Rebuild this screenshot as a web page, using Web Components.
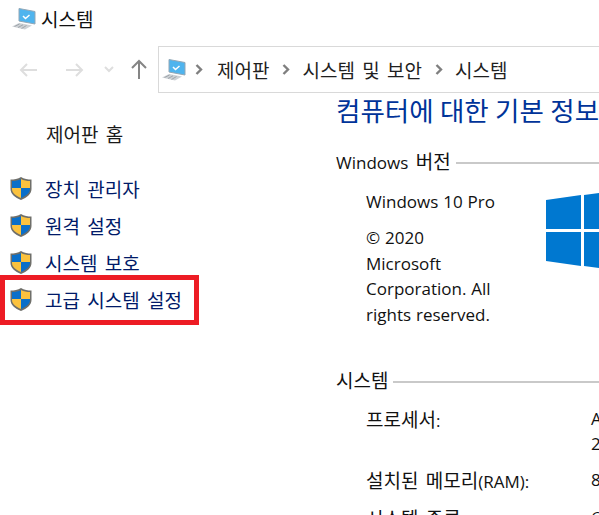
<!DOCTYPE html>
<html lang="ko">
<head>
<meta charset="utf-8">
<title>시스템</title>
<style>
  html, body { margin: 0; height: 100%; background: #fff; overflow: hidden; }
  body { font-family: "Noto Sans CJK KR", "Open Sans", sans-serif; }
</style>
</head>
<body>
<sys-window></sys-window>
<script>
const PC_ICON = `<svg width="24" height="22" viewBox="0 0 24 22">
  <path d="M7 .5 L23 3.500 V16 L7 13 Z" fill="#4fb4ee" stroke="#93a7b6" stroke-width="1"/>
  <path d="M11 8 l2.500 2.500 l4 -3.500" fill="none" stroke="#fff" stroke-width="1.500"/>
  <path d="M0 18.500 L7 15 L20 17.500 L13 21.500 Z" fill="#cdd1d5"/>
  <path d="M2.500 18.500 L7.500 16 M6 19.500 L11 16.800 M9.500 20.500 L14.500 17.500" stroke="#8d949a" stroke-width=".7"/>
</svg>`;
const SHIELD = `<svg width="24" height="25" viewBox="0 0 24 25">
  <path d="M12 1 C9 3 5 3.500 1.500 3.500 V13 C1.500 18 6 21.500 12 24 C18 21.500 22.500 18 22.500 13 V3.500 C19 3.500 15 3 12 1 Z" fill="#6f6f6a"/>
  <path d="M12 3 C9.500 4.500 6 5 3 5 V12 H12 Z" fill="#0a6fc9"/>
  <path d="M12 3 C14.500 4.500 18 5 21 5 V12 H12 Z" fill="#fbc23e"/>
  <path d="M3 12 H12 V22 C7 20 3 17 3 13 Z" fill="#fbc23e"/>
  <path d="M21 12 H12 V22 C17 20 21 17 21 13 Z" fill="#0a6fc9"/>
</svg>`;
const CHEVRON = `<svg width="8" height="11" viewBox="0 0 8 11"><path d="M1.500 1 L6 5.500 L1.500 10" fill="none" stroke="#7f7f7f" stroke-width="2.400"/></svg>`;

class NavToolbar extends HTMLElement {
  constructor() {
    super();
    this.attachShadow({ mode: 'open' });
    this.shadowRoot.innerHTML = `
      <style>
        :host { display: flex; height: 47px; margin-top: 9px; color: #1f1f1f; }
        .btns { width: 158px; display: flex; align-items: center; flex: none; }
        svg { display: block; flex: none; }
        .addr { flex: 1; border: 1px solid #d9d9d9; border-right: 0; display: flex; align-items: center; padding-left: 3px; font-size: 19px; word-spacing: 2px; white-space: nowrap; }
        .sep { display: block; margin: 0 12px 0 13px; flex: none; }
        .sep.first { margin: 0 14px 0 9px; }
      </style>
      <div class="btns">
        <svg style="margin-left:18px" width="20" height="16" viewBox="0 0 20 16"><path d="M19 8 H3 M9 2 L3 8 L9 14" fill="none" stroke="#dedede" stroke-width="2"/></svg>
        <svg style="margin-left:27px" width="20" height="16" viewBox="0 0 20 16"><path d="M1 8 H17 M11 2 L17 8 L11 14" fill="none" stroke="#dedede" stroke-width="2"/></svg>
        <svg style="margin-left:19px" width="10" height="7" viewBox="0 0 10 7"><path d="M1 1 L5 5 L9 1" fill="none" stroke="#dedede" stroke-width="2"/></svg>
        <svg style="margin-left:16px" width="18" height="21" viewBox="0 0 18 21"><path d="M9 20 V3 M2 9 L9 2 L16 9" fill="none" stroke="#858585" stroke-width="2"/></svg>
      </div>
      <div class="addr">
        ${PC_ICON}
        <span class="sep first">${CHEVRON}</span>
        <span>제어판</span>
        <span class="sep">${CHEVRON}</span>
        <span>시스템 및 보안</span>
        <span class="sep">${CHEVRON}</span>
        <span>시스템</span>
      </div>`;
  }
}
customElements.define('nav-toolbar', NavToolbar);

class TaskLink extends HTMLElement {
  constructor() {
    super();
    this.attachShadow({ mode: 'open' });
    this.shadowRoot.innerHTML = `
      <style>
        :host { display: flex; align-items: center; height: 37px; gap: 12px; padding-left: 9px; color: #001a68; font-size: 19px; word-spacing: 2px; white-space: nowrap; position: relative; }
        svg { flex: none; display: block; }
        :host([marked])::after { content: ""; position: absolute; left: 0; top: -6px; width: 199px; height: 50px; box-sizing: border-box; border: 5px solid #ed1c24; }
      </style>
      ${SHIELD}<span><slot></slot></span>`;
  }
}
customElements.define('task-link', TaskLink);

class SideNav extends HTMLElement {
  constructor() {
    super();
    this.attachShadow({ mode: 'open' });
    this.shadowRoot.innerHTML = `
      <style>
        :host { display: block; width: 336px; flex: none; padding-top: 26px; box-sizing: border-box; }
        .home { padding-left: 46px; height: 30px; line-height: 30px; color: #1a1a1a; font-size: 19px; word-spacing: 2px; margin-bottom: 21px; }
        .list { display: flex; flex-direction: column; }
      </style>
      <div class="home">제어판 홈</div>
      <div class="list"><slot></slot></div>`;
  }
}
customElements.define('side-nav', SideNav);

class InfoSection extends HTMLElement {
  constructor() {
    super();
    this.attachShadow({ mode: 'open' });
    this.shadowRoot.innerHTML = `
      <style>
        :host { display: block; }
        .head { display: flex; align-items: center; gap: 5px; height: 24px; color: #111; white-space: nowrap; }
        .rule { flex: 1; height: 2px; background: #c9c9c9; margin-top: 6px; }
        .body { padding-left: 30px; }
      </style>
      <div class="head"><slot name="title"></slot><div class="rule"></div></div>
      <div class="body"><slot></slot></div>`;
  }
}
customElements.define('info-section', InfoSection);

class WinLogo extends HTMLElement {
  constructor() {
    super();
    this.attachShadow({ mode: 'open' });
    this.shadowRoot.innerHTML = `
      <style>
        :host { display: block; position: absolute; left: 546px; top: 192px; }
        svg { display: block; }
      </style>
      <svg width="53" height="77" viewBox="0 0 53 77">
        <path d="M0 8 L35 3 V37 H0 Z M38 3 L53 1 V37 H38 Z M0 40 H35 V74 L0 69 Z M38 40 H53 V76 L38 74 Z" fill="#0078d0"/>
      </svg>`;
  }
}
customElements.define('win-logo', WinLogo);

class SysWindow extends HTMLElement {
  constructor() {
    super();
    this.attachShadow({ mode: 'open' });
    this.shadowRoot.innerHTML = `
      <style>
        :host { display: block; width: 599px; height: 515px; overflow: hidden; position: relative; font-family: "Noto Sans CJK KR", "Open Sans", sans-serif; font-size: 19px; word-spacing: 2px; }
        .en { font-family: "Open Sans", "Noto Sans CJK KR", sans-serif; font-size: 17px; word-spacing: .5px; }
        .title { display: flex; align-items: center; gap: 5px; height: 37px; padding-left: 12px; color: #111; }
        .title svg { display: block; }
        .main { display: flex; height: 422px; }
        .content { flex: 1; min-width: 0; color: #111; }
        h1 { font: inherit; font-size: 26.500px; letter-spacing: 0; word-spacing: -1px; color: #003399; margin: 4px 0 0; height: 25px; line-height: 25px; white-space: nowrap; }
        info-section.ver { margin-top: 26px; }
        info-section.sys { margin-top: 40px; }
        .name { margin-top: 17px; line-height: 25px; }
        .copy { margin-top: 11px; line-height: 25.500px; width: 130px; }
        .rows { margin-top: 15px; }
        .row { display: flex; line-height: 25px; margin-bottom: 11px; white-space: nowrap; }
        .row .k { width: 225px; flex: none; }
      </style>
      <div class="title">${PC_ICON}<span>시스템</span></div>
      <nav-toolbar></nav-toolbar>
      <div class="main">
        <side-nav>
          <task-link>장치 관리자</task-link>
          <task-link>원격 설정</task-link>
          <task-link>시스템 보호</task-link>
          <task-link marked>고급 시스템 설정</task-link>
        </side-nav>
        <div class="content">
          <h1>컴퓨터에 대한 기본 정보</h1>
          <info-section class="ver">
            <span slot="title"><span class="en">Windows</span> 버전</span>
            <div class="name en">Windows 10 Pro</div>
            <div class="copy en">© 2020 Microsoft Corporation. All rights reserved.</div>
          </info-section>
          <info-section class="sys">
            <span slot="title">시스템</span>
            <div class="rows">
              <div class="row"><div class="k">프로세서<span class="en">:</span></div><div class="en">A<br>2</div></div>
              <div class="row"><div class="k">설치된 메모리<span class="en">(RAM):</span></div><div class="en">8</div></div>
              <div class="row"><div class="k">시스템 종류</div><div class="en">6</div></div>
            </div>
          </info-section>
        </div>
      </div>
      <win-logo></win-logo>`;
  }
}
customElements.define('sys-window', SysWindow);
</script>
</body>
</html>
